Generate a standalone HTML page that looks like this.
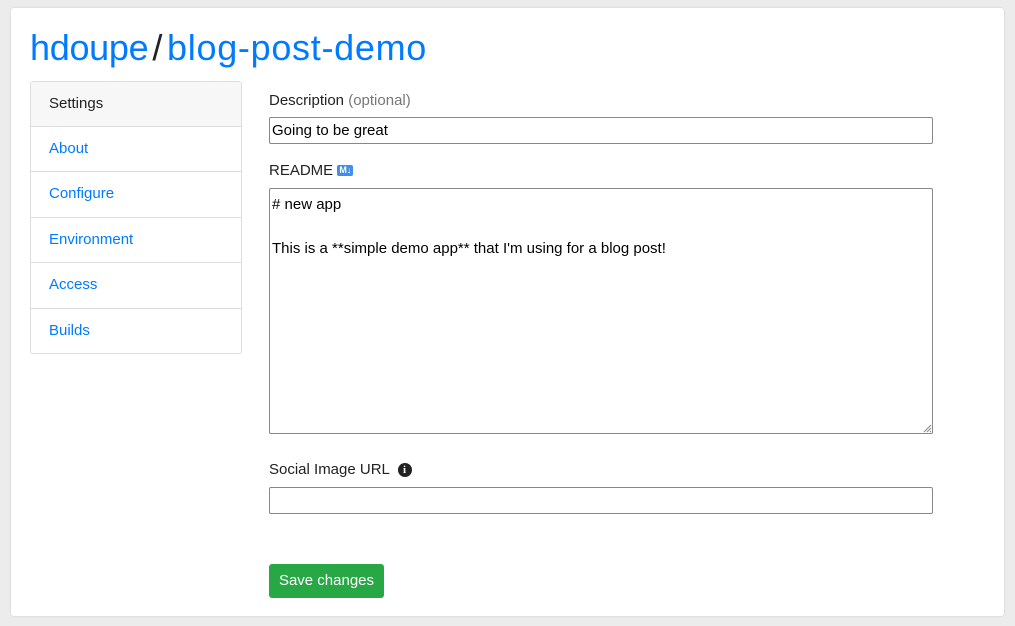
<!DOCTYPE html>
<html><head><style>
body{margin:0;background:#ececec;font-family:"Liberation Sans",sans-serif;width:1015px;height:626px;overflow:hidden;position:relative}
.card{position:absolute;left:11px;top:8px;width:993px;height:608px;background:#fff;border-radius:3px;box-shadow:0 0 2px rgba(0,0,0,.15)}
.a{position:absolute}
h1{position:absolute;left:30px;top:27px;margin:0;font-size:36px;font-weight:normal;color:#007bff;line-height:42px;letter-spacing:-0.3px}
h1 span{color:#222;margin:0 5px 0 4px}
h1 b{font-weight:normal;letter-spacing:0.7px}
.side{position:absolute;left:30px;top:81px;width:210px;border:1px solid #ddd;border-radius:3px}
.side div{height:44.4px;line-height:44px;padding-left:18px;font-size:15px;color:#007bff;border-top:1px solid #ddd}
.side div:first-child{border-top:none;background:#f7f7f7;color:#222;height:44px}
.lbl{position:absolute;left:269px;font-size:15px;color:#222}
.in{position:absolute;left:269px;width:664px;border:1px solid #888;border-radius:2px;font-size:15px;color:#000;box-sizing:border-box;padding-left:2px}
.btn{position:absolute;left:269px;top:564px;width:115px;height:34px;background:#28a745;color:#fff;border-radius:3px;font-size:15px;text-align:center;line-height:34px}
</style></head><body>
<div class="card"></div>
<h1>hdoupe<span>/</span><b>blog-post-demo</b></h1>
<div class="side"><div>Settings</div><div>About</div><div>Configure</div><div>Environment</div><div>Access</div><div>Builds</div></div>
<div class="lbl" style="top:92px">Description <span style="color:#777">(optional)</span></div>
<div class="in" style="top:117px;height:27px;line-height:26px">Going to be great</div>
<div class="lbl" style="top:162px">README <span style="display:inline-block;background:#3d8fe8;color:#fff;font-size:9px;font-weight:bold;line-height:11px;padding:0 2px;border-radius:2px;vertical-align:2px">M↓</span></div>
<div class="in" style="top:188px;height:246px;line-height:22px;padding-top:5px">
# new app<br><br>This is a **simple demo app** that I'm using for a blog post!</div>
<svg class="a" style="left:922px;top:423px" width="10" height="10"><path d="M9 2L2 9M9 5L5 9M9 8L8 9" stroke="#888"/></svg>
<div class="lbl" style="top:461px">Social Image URL <span style="display:inline-block;width:14px;height:14px;border-radius:50%;background:#222;color:#fff;font-size:11px;font-weight:bold;line-height:14px;text-align:center;font-family:'Liberation Serif',serif;margin-left:4px;vertical-align:1px">i</span></div>
<div class="in" style="top:487px;height:27px"></div>
<div class="btn">Save changes</div>
</body></html>
